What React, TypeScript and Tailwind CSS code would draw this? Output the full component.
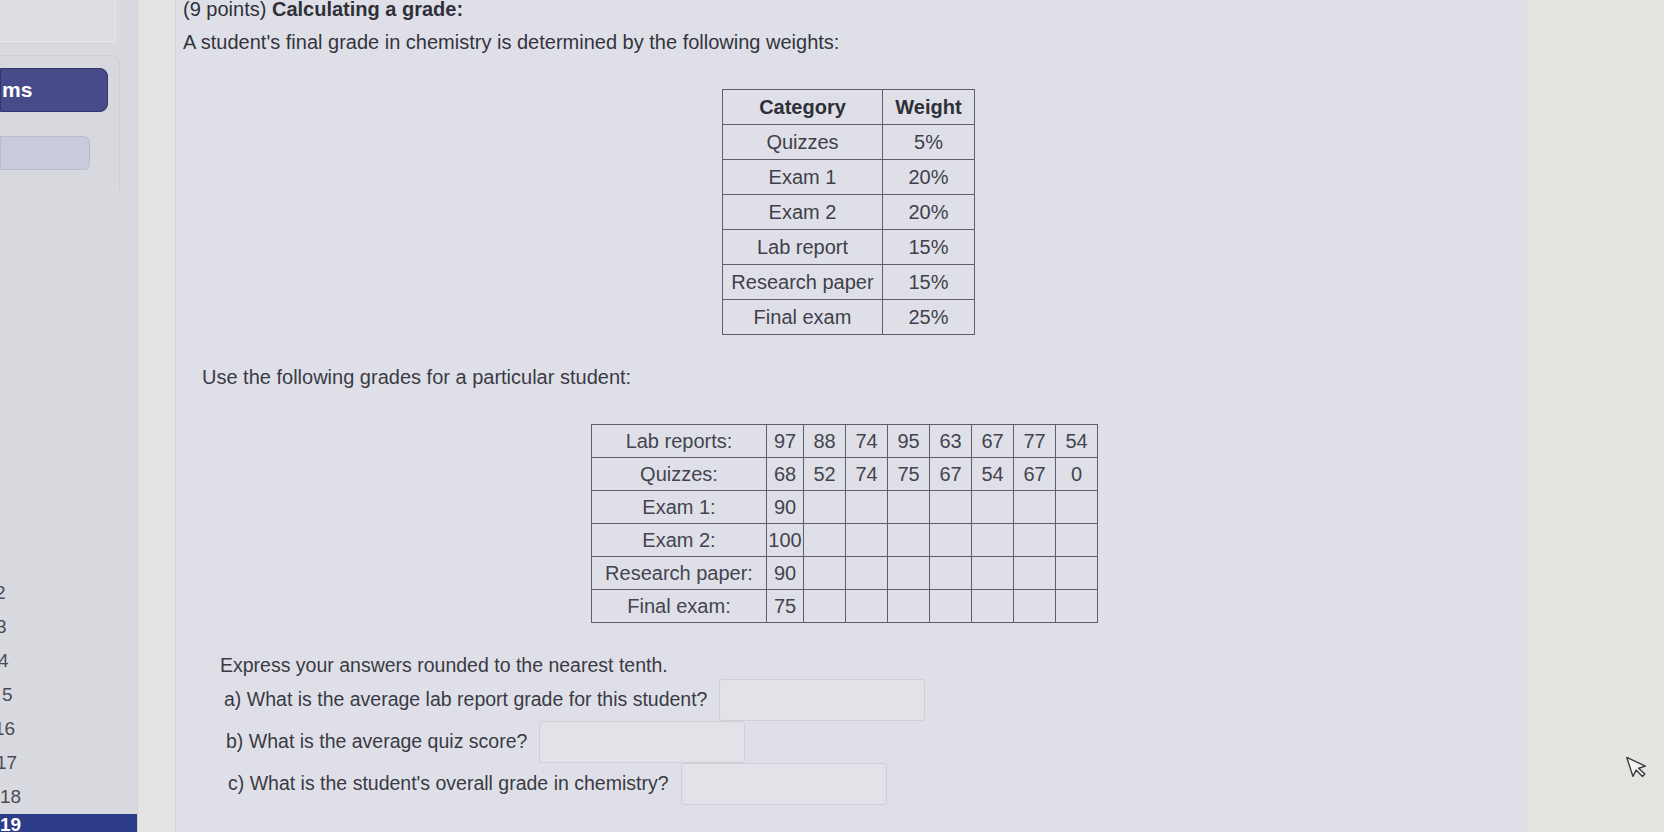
import React from 'react'

const weights = [
  ['Quizzes', '5%'],
  ['Exam 1', '20%'],
  ['Exam 2', '20%'],
  ['Lab report', '15%'],
  ['Research paper', '15%'],
  ['Final exam', '25%'],
]

const grades: [string, string[]][] = [
  ['Lab reports:', ['97', '88', '74', '95', '63', '67', '77', '54']],
  ['Quizzes:', ['68', '52', '74', '75', '67', '54', '67', '0']],
  ['Exam 1:', ['90']],
  ['Exam 2:', ['100']],
  ['Research paper:', ['90']],
  ['Final exam:', ['75']],
]

// side list of problem numbers; the screen edge hides the leading digits
const numbers = [
  { n: '2', cls: '-ml-[5px]' },
  { n: '3', cls: '-ml-[4px]' },
  { n: '4', cls: '-ml-[2px]' },
  { n: '5', cls: 'ml-[2px]' },
  { n: '16', cls: '-ml-[6px]' },
  { n: '17', cls: '-ml-[4px]' },
  { n: '18', cls: 'ml-0' },
]

function Sidebar() {
  return (
    <aside className="w-[138px] shrink-0 bg-[#d9dadf] flex flex-col border-r border-[#cfd0d6]">
      <div className="h-[42px] w-[116px] bg-[#dcdde1] border-b border-r border-[#e6e7e9]" />
      <div className="mt-[13px] w-[120px] rounded-tr-lg border-t border-r border-[#cdced6] bg-[#d8d9df] pt-[12px] pb-[20px]">
        <div className="h-[44px] w-[108px] rounded-r-lg bg-[#484b89] border border-[#34366a] flex items-center">
          <span className="pl-[1px] text-[21px] font-bold text-white">ms</span>
        </div>
        <div className="mt-[24px] h-[34px] w-[90px] rounded-r-md bg-[#c9cbda] border border-[#b9bccd]" />
      </div>
      <div className="flex-1" />
      <div className="flex flex-col text-[19px] text-[#4b4c57] overflow-hidden">
        {numbers.map((r) => (
          <div key={r.n} className="h-[34px] flex items-center whitespace-nowrap">
            <span className={r.cls}>{r.n}</span>
          </div>
        ))}
        <div className="h-[18px] bg-[#2c3c88] text-white font-bold text-[19px] leading-[18px] pt-[2px]">
          19
        </div>
      </div>
    </aside>
  )
}

function WeightTable() {
  return (
    <table className="border-collapse border border-[#5e5f6b] text-[20px] text-[#3f404b] ml-[546px] mt-[35px]">
      <thead>
        <tr className="h-[35px]">
          <th className="w-[160px] border border-[#5e5f6b] font-bold text-[#2e2f38]">Category</th>
          <th className="w-[92px] border border-[#5e5f6b] font-bold text-[#2e2f38]">Weight</th>
        </tr>
      </thead>
      <tbody>
        {weights.map(([c, w]) => (
          <tr key={c} className="h-[35px]">
            <td className="border border-[#5e5f6b] text-center">{c}</td>
            <td className="border border-[#5e5f6b] text-center">{w}</td>
          </tr>
        ))}
      </tbody>
    </table>
  )
}

function GradeTable() {
  return (
    <table className="border-collapse border border-[#5e5f6b] text-[20px] text-[#434450] ml-[415px] mt-[35px]">
      <tbody>
        {grades.map(([label, vals]) => (
          <tr key={label} className="h-[33px]">
            <td className="w-[175px] border border-[#5e5f6b] text-center">{label}</td>
            {Array.from({ length: 8 }).map((_, i) => (
              <td
                key={i}
                className={`border border-[#5e5f6b] text-center ${i === 0 ? 'w-[37px]' : 'w-[42px]'}`}
              >
                {vals[i] ?? ''}
              </td>
            ))}
          </tr>
        ))}
      </tbody>
    </table>
  )
}

function Question({ label, text, indent }: { label: string; text: string; indent: string }) {
  return (
    <div className={`h-[42px] flex items-center text-[19.5px] text-[#393a45] ${indent}`}>
      <span>
        {label}) {text}
      </span>
      <div className="ml-[12px] h-[42px] w-[206px] rounded-[3px] border border-[#cdced6] bg-[#e2e3e9]" />
    </div>
  )
}

export default function App() {
  return (
    <div className="relative flex h-[832px] w-[1664px] overflow-hidden bg-[#e5e4df] font-['Liberation_Sans',Arial,sans-serif]">
      <Sidebar />
      <div className="w-[38px] shrink-0 bg-[#e4e5e3] border-r border-[#d6d7da]" />
      <main className="w-[1352px] shrink-0 bg-[#dfe0e7] flex flex-col">
        <div className="-mt-[3px] pl-[7px] h-[24px] leading-[24px] text-[20px] text-[#2f3039]">
          (9 points) <span className="font-bold">Calculating a grade:</span>
        </div>
        <div className="mt-[9px] pl-[7px] h-[24px] leading-[24px] text-[20px] text-[#33343e]">
          A student's final grade in chemistry is determined by the following weights:
        </div>
        <div>
          <WeightTable />
        </div>
        <div className="mt-[30px] pl-[26px] h-[24px] leading-[24px] text-[20px] text-[#3a3b45]">
          Use the following grades for a particular student:
        </div>
        <div>
          <GradeTable />
        </div>
        <div className="mt-[30px] pl-[44px] h-[24px] leading-[24px] text-[19.5px] text-[#3a3b45]">
          Express your answers rounded to the nearest tenth.
        </div>
        <div className="mt-[2px] flex flex-col">
          <Question indent="pl-[48px]" label="a" text="What is the average lab report grade for this student?" />
          <Question indent="pl-[50px]" label="b" text="What is the average quiz score?" />
          <Question indent="pl-[52px]" label="c" text="What is the student's overall grade in chemistry?" />
        </div>
      </main>
      <div className="flex-1" />
      <svg
        className="absolute left-[1628px] top-[752px] rotate-[-18deg]"
        width="22"
        height="28"
        viewBox="0 0 22 28"
      >
        <path
          d="M2 2 L2 22 L7 17 L11 25 L14 23.5 L10 16 L17 16 Z"
          fill="#f4f4f2"
          stroke="#3a3a40"
          strokeWidth="1.4"
          strokeLinejoin="round"
        />
      </svg>
    </div>
  )
}
